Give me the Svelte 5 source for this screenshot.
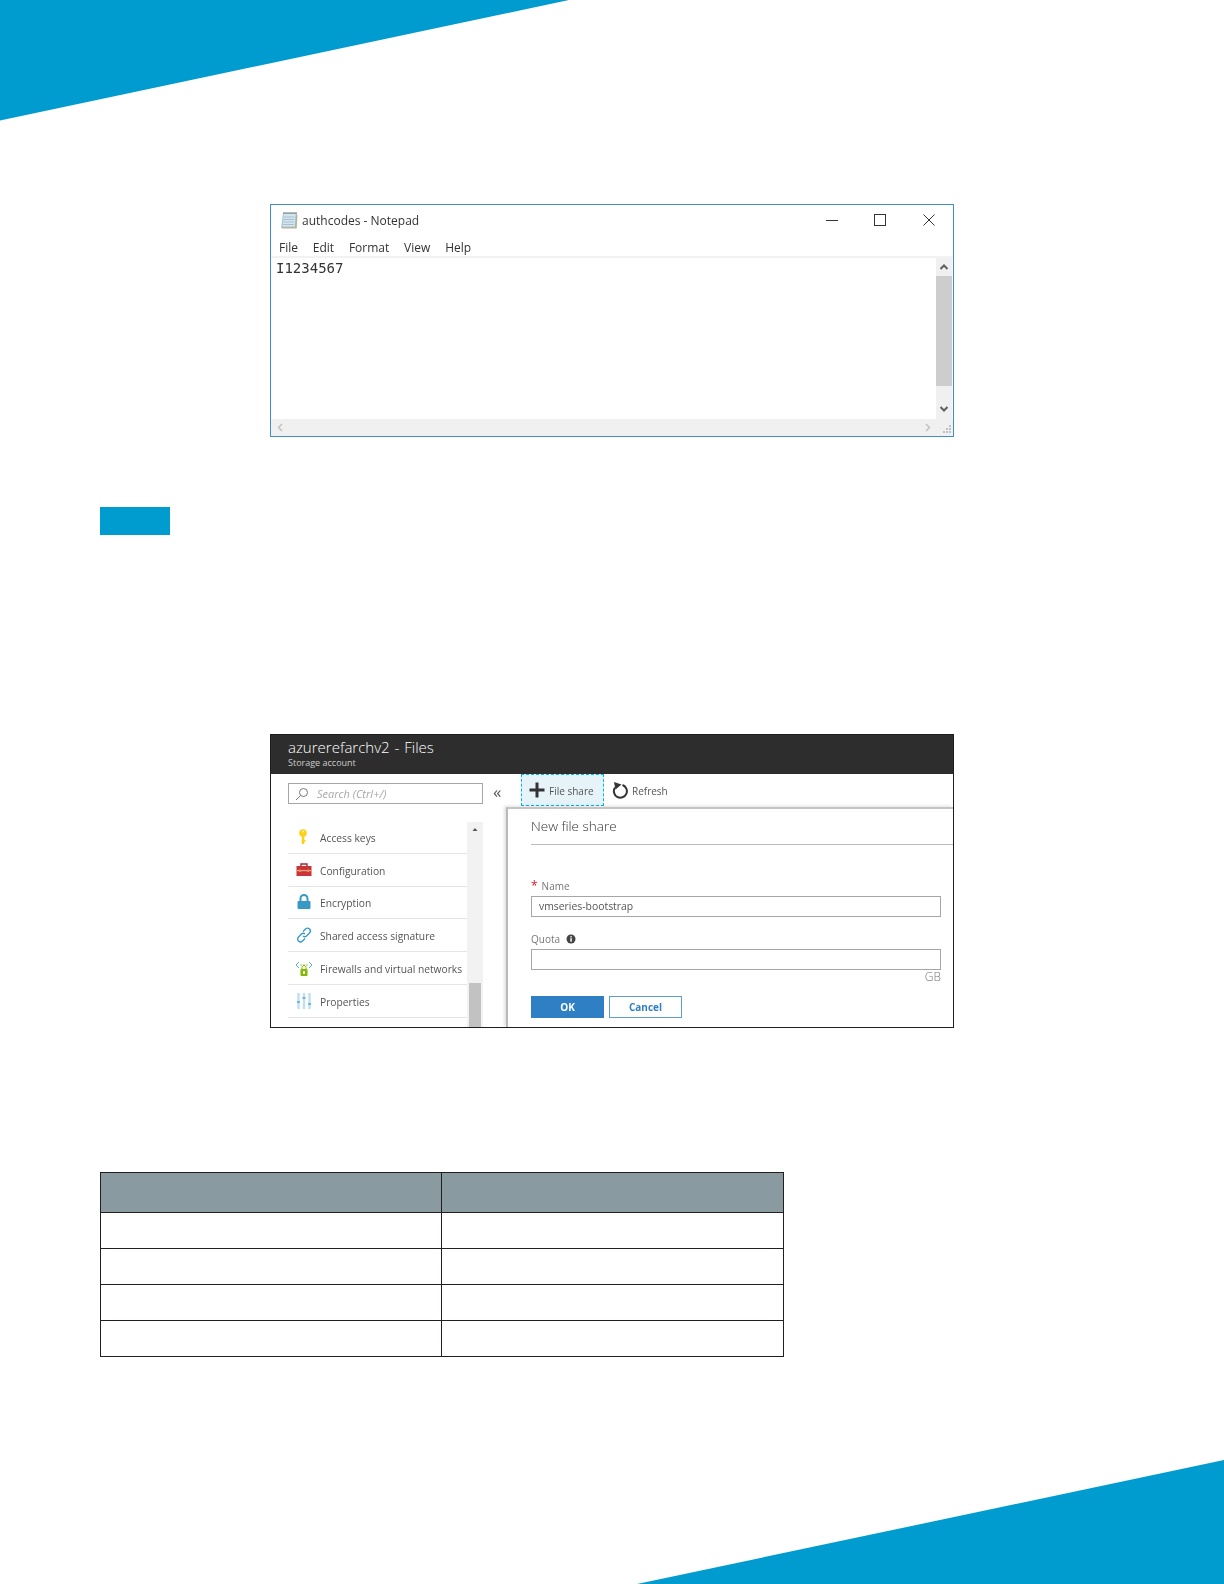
<script>
  const menu = ['File', 'Edit', 'Format', 'View', 'Help'];
  const navItems = [
    { label: 'Access keys', icon: 'key' },
    { label: 'Configuration', icon: 'toolbox' },
    { label: 'Encryption', icon: 'lock' },
    { label: 'Shared access signature', icon: 'link' },
    { label: 'Firewalls and virtual networks', icon: 'firewall' },
    { label: 'Properties', icon: 'sliders' }
  ];
  const rows = [1, 2, 3, 4];
</script>

<div class="page">
  <svg class="corner top" width="569" height="121" viewBox="0 0 569 121"><polygon points="0,0 569,0 0,120.500" /></svg>
  <svg class="corner bottom" width="587" height="124" viewBox="0 0 587 124"><polygon points="587,0 587,124 0,124" /></svg>

  <div class="notepad">
    <div class="np-title">
      <svg class="np-icon" width="18" height="18" viewBox="0 0 18 18">
        <path d="M3 2h14l-1 15H1z" fill="#a9c9dc" />
        <path d="M4 3h11.500l-.8 12.500H2.800z" fill="#d3e6f0" />
        <path d="M4 6h10.500M3.800 8.500h10.500M3.500 11h10.500M3.300 13.500h10.500" stroke="#a6c0cf" />
        <path d="M3.500 2h13" stroke="#777" stroke-dasharray="1 1" stroke-width="2" />
        <path d="M16 4h1.500l-.8 13.500H2V16h13z" fill="#b8b29c" />
      </svg>
      <span class="np-name">authcodes - Notepad</span>
      <div class="np-controls">
        <svg width="16" height="16" viewBox="0 0 16 16"><path d="M1 8.500h12" stroke="#333" fill="none" /></svg>
        <svg width="16" height="16" viewBox="0 0 16 16"><rect x="1.500" y="2.500" width="11" height="11" stroke="#333" fill="none" /></svg>
        <svg width="16" height="16" viewBox="0 0 16 16"><path d="M2.500 2.500l11 11M13.500 2.500l-11 11" stroke="#333" fill="none" /></svg>
      </div>
    </div>
    <div class="np-menu">
      {#each menu as m}<span>{m}</span>{/each}
    </div>
    <div class="np-body">
      <div class="np-text">I1234567</div>
      <div class="vscroll">
        <svg width="16" height="18" viewBox="0 0 16 18"><path d="M4.500 11l3.500-3.500 3.500 3.500" stroke="#606060" stroke-width="2" fill="none" /></svg>
        <div class="vtrack"><div class="vthumb"></div></div>
        <svg width="16" height="18" viewBox="0 0 16 18"><path d="M4.500 6l3.500 3.500 3.500-3.500" stroke="#606060" stroke-width="2" fill="none" /></svg>
      </div>
    </div>
    <div class="hscroll">
      <svg width="16" height="17" viewBox="0 0 16 17"><path d="M10 5l-3.500 3.500 3.500 3.500" stroke="#c4c4c4" stroke-width="1.600" fill="none" /></svg>
      <svg width="16" height="17" viewBox="0 0 16 17"><path d="M6 5l3.500 3.500-3.500 3.500" stroke="#c4c4c4" stroke-width="1.600" fill="none" /></svg>
      <svg width="16" height="17" viewBox="0 0 16 17"><path d="M12 6h2v2h-2zM9 9h2v2H9zM12 9h2v2h-2zM6 12h2v2H6zM9 12h2v2H9zM12 12h2v2h-2z" fill="#c0c0c0" /></svg>
    </div>
  </div>

  <div class="callout"></div>

  <div class="azure">
    <header class="az-head">
      <div class="az-title">azurerefarchv2 - Files</div>
      <div class="az-sub">Storage account</div>
    </header>
    <div class="az-main">
      <aside class="az-side">
        <div class="az-searchrow">
          <div class="az-search">
            <svg width="14" height="14" viewBox="0 0 14 14"><circle cx="8.500" cy="5.500" r="4" stroke="#777" fill="none" /><path d="M5.500 8.500L1 13" stroke="#777" fill="none" /></svg>
            <span>Search (Ctrl+/)</span>
          </div>
          <span class="collapse">«</span>
        </div>
        <div class="az-navwrap">
          <ul class="az-nav">
            {#each navItems as item}
              <li>
                <svg width="18" height="18" viewBox="0 0 18 18">
                  {#if item.icon === 'key'}
                    <circle cx="8" cy="5" r="3.800" fill="#fcd116" /><rect x="6.800" y="7" width="2.500" height="9" fill="#fcd116" /><rect x="9" y="12" width="1.500" height="1.500" fill="#fcd116" /><circle cx="8" cy="3.500" r="1" fill="#fff3b0" />
                  {:else if item.icon === 'toolbox'}
                    <path d="M6 5V3h6v2" stroke="#a4262c" fill="none" stroke-width="1.400" /><rect x="1.500" y="5" width="15" height="10" fill="#c8343a" /><rect x="1.500" y="9" width="15" height="1.200" fill="#f0a38f" /><rect x="4" y="8.500" width="2" height="2.500" fill="#ef8c3c" /><rect x="12" y="8.500" width="2" height="2.500" fill="#ef8c3c" />
                  {:else if item.icon === 'lock'}
                    <path d="M5.500 8V5.500a3.500 3.500 0 0 1 7 0V8" stroke="#3999c6" stroke-width="2" fill="none" /><rect x="2.500" y="8" width="13" height="8" rx="1" fill="#3999c6" />
                  {:else if item.icon === 'link'}
                    <path d="M8 5.500l2.500-2.500a2.500 2.500 0 0 1 4 4l-3 3a2.500 2.500 0 0 1-3.500 0M10 12.500L7.500 15a2.500 2.500 0 0 1-4-4l3-3a2.500 2.500 0 0 1 3.500 0" stroke="#3999c6" stroke-width="1.400" fill="none" />
                  {:else if item.icon === 'firewall'}
                    <path d="M4 3L1 6 4 9M14 3l3 3-3 3" stroke="#59b4d9" fill="none" /><path d="M5.500 6h1M8.500 6h1M11.500 6h1" stroke="#7fba00" stroke-width="1.400" /><path d="M7 10V8.500a2 2 0 0 1 4 0V10" stroke="#7fba00" fill="none" /><rect x="5.500" y="10" width="7" height="7" rx="1" fill="#7fba00" /><rect x="8" y="12" width="2" height="3" fill="#fff" />
                  {:else}
                    <path d="M3.500 1v16M9 1v16M14.500 1v16" stroke="#bfe0f0" stroke-width="2.400" /><path d="M2 10h3M7.500 6h3M13 12h3" stroke="#59a8d0" stroke-width="1.600" />
                  {/if}
                </svg>
                <span>{item.label}</span>
              </li>
            {/each}
          </ul>
          <div class="az-navscroll">
            <svg width="16" height="16" viewBox="0 0 16 16"><path d="M5.500 9l2.500-3 2.500 3z" fill="#555" /></svg>
            <div class="az-navthumb"></div>
          </div>
        </div>
      </aside>
      <section class="az-right">
        <div class="az-toolbar">
          <div class="tool selected">
            <svg width="16" height="16" viewBox="0 0 16 16"><path d="M6.500 0.500h3v6h6v3h-6v6h-3v-6h-6v-3h6z" fill="#333" /></svg>
            <span>File share</span>
          </div>
          <div class="tool">
            <svg width="18" height="18" viewBox="0 0 18 18"><path d="M11.500 4a6.500 6.500 0 1 1-7.500 2.500" stroke="#333" stroke-width="2" fill="none" /><path d="M3 1l7.500 2.500-6 5z" fill="#333" /></svg>
            <span>Refresh</span>
          </div>
        </div>
        <div class="blade">
          <h2>New file share</h2>
          <label class="fld name"><span class="star">*</span> Name</label>
          <div class="input">vmseries-bootstrap</div>
          <label class="fld quota">
            Quota
            <svg width="10" height="10" viewBox="0 0 10 10"><circle cx="5" cy="5" r="4.500" fill="#444" /><rect x="4.300" y="4.200" width="1.500" height="3.500" fill="#fff" /><rect x="4.300" y="2.200" width="1.500" height="1.300" fill="#fff" /></svg>
          </label>
          <div class="input"></div>
          <div class="unit">GB</div>
          <div class="buttons">
            <button class="ok">OK</button>
            <button class="cancel">Cancel</button>
          </div>
        </div>
      </section>
    </div>
  </div>

  <table class="grid">
    <thead>
      <tr><th></th><th></th></tr>
    </thead>
    <tbody>
      {#each rows as r (r)}
        <tr><td></td><td></td></tr>
      {/each}
    </tbody>
  </table>
</div>

<style>
  :global(body) {
    margin: 0;
    background: #fff;
  }
  .page {
    position: relative;
    width: 1224px;
    height: 1584px;
    overflow: hidden;
    box-sizing: border-box;
    padding-top: 204px;
    font-family: "Open Sans", sans-serif;
  }
  .corner {
    position: absolute;
    fill: #009bcf;
  }
  .corner.top {
    left: 0;
    top: 0;
  }
  .corner.bottom {
    right: 0;
    bottom: 0;
  }

  /* notepad */
  .notepad {
    margin-left: 270px;
    width: 684px;
    height: 233px;
    box-sizing: border-box;
    border: 1px solid #3f8fcf;
    display: flex;
    flex-direction: column;
    color: #333;
    filter: blur(0.25px);
  }
  .np-title {
    display: flex;
    align-items: center;
    height: 29px;
    padding: 0 16px 0 9px;
  }
  .np-icon {
    margin-right: 4px;
  }
  .np-name {
    font-size: 12px;
    flex: 1;
    padding-top: 2px;
  }
  .np-controls {
    display: flex;
    gap: 32px;
  }
  .np-menu {
    display: flex;
    gap: 14.800px;
    padding: 5px 0 0 8px;
    box-sizing: border-box;
    font-size: 12px;
    border-bottom: 2px solid #f2f2f2;
    height: 24px;
  }
  .np-body {
    flex: 1;
    display: flex;
    min-height: 0;
  }
  .np-text {
    flex: 1;
    padding: 2px 0 0 5px;
    font-family: "DejaVu Sans Mono", monospace;
    font-size: 14px;
    line-height: 17px;
  }
  .vscroll {
    width: 16px;
    margin-right: 1px;
    background: #f0f0f0;
    display: flex;
    flex-direction: column;
  }
  .vtrack {
    flex: 1;
  }
  .vthumb {
    height: 110px;
    background: #cdcdcd;
  }
  .hscroll {
    height: 17px;
    background: #f0f0f0;
    display: flex;
    justify-content: space-between;
  }
  .hscroll svg:nth-child(1) {
    margin-left: 1px;
  }
  .hscroll svg:nth-child(2) {
    margin-left: auto;
    margin-right: 1px;
  }

  .callout {
    margin: 70px 0 0 100px;
    width: 70px;
    height: 28px;
    background: #009bcf;
  }

  /* azure */
  .azure {
    margin: 199px 0 0 270px;
    width: 684px;
    height: 294px;
    box-sizing: border-box;
    border: 1px solid #1e1e1e;
    display: flex;
    flex-direction: column;
    overflow: hidden;
    filter: blur(0.25px);
  }
  .az-head {
    background: #2d2d2d;
    color: #fff;
    height: 39px;
    padding: 2px 0 0 17px;
    box-sizing: border-box;
  }
  .az-title {
    font-size: 15px;
    font-weight: 300;
    line-height: 20px;
    word-spacing: 1px;
  }
  .az-sub {
    font-size: 9px;
    line-height: 11px;
    color: #ccc;
  }
  .az-main {
    flex: 1;
    display: flex;
    min-height: 0;
  }
  .az-side {
    width: 235px;
    padding-left: 17px;
    box-sizing: border-box;
  }
  .az-searchrow {
    display: flex;
    align-items: center;
    margin-top: 9px;
  }
  .az-search {
    width: 195px;
    height: 21px;
    box-sizing: border-box;
    border: 1px solid #a6a6a6;
    display: flex;
    align-items: center;
    gap: 8px;
    padding-left: 6px;
    font-size: 11px;
    font-style: italic;
    color: #a8a8a8;
  }
  .collapse {
    margin: -4px 0 0 10px;
    font-size: 17px;
    line-height: 15px;
    color: #555;
  }
  .az-navwrap {
    display: flex;
    margin-top: 17px;
  }
  .az-nav {
    list-style: none;
    margin: 0;
    padding: 0;
    width: 179px;
    flex-shrink: 0;
  }
  .az-nav li {
    height: 32.800px;
    box-sizing: border-box;
    border-bottom: 1px solid #e5e5e5;
    display: flex;
    align-items: center;
    gap: 7px;
    padding: 2px 0 0 7px;
    font-size: 10.250px;
    color: #555;
    white-space: nowrap;
  }
  .az-nav li svg {
    flex-shrink: 0;
    margin-top: -2px;
  }
  .az-navscroll {
    width: 16px;
    height: 205px;
    margin-top: 1px;
    background: #f2f2f2;
    display: flex;
    flex-direction: column;
    align-items: center;
    flex-shrink: 0;
  }
  .az-navthumb {
    width: 12px;
    height: 44px;
    margin-top: auto;
    background: #c2c2c2;
  }
  .az-right {
    flex: 1;
    display: flex;
    flex-direction: column;
    min-width: 0;
  }
  .az-toolbar {
    display: flex;
    align-items: flex-start;
    height: 33px;
    padding-left: 15px;
    gap: 7px;
  }
  .tool {
    display: flex;
    align-items: center;
    gap: 4px;
    font-size: 10px;
    color: #555;
    height: 32px;
    box-sizing: border-box;
    padding: 0 7px;
  }
  .tool span {
    padding-top: 2px;
  }
  .tool:last-child {
    padding: 0;
    gap: 3px;
  }
  .tool.selected {
    width: 83px;
    background: #e6f4fa;
    border: 1px dashed #00b7ea;
  }
  .blade {
    flex: 1;
    border-left: 2px solid #b8b8b8;
    border-top: 2px solid #c4c4c4;
    padding: 0 12px 0 23px;
    min-height: 0;
    color: #555;
    box-shadow: -2px -1px 3px rgba(0, 0, 0, 0.12);
  }
  .blade h2 {
    margin: 0 -12px 0 0;
    height: 36px;
    box-sizing: border-box;
    padding-top: 8px;
    font-size: 13.500px;
    line-height: 18px;
    font-weight: 300;
    color: #333;
    border-bottom: 1px solid #bbb;
  }
  .fld {
    display: flex;
    align-items: center;
    gap: 4px;
    font-size: 10px;
    color: #777;
  }
  .fld.name {
    margin-top: 33px;
    height: 18px;
    padding-bottom: 3px;
    box-sizing: border-box;
  }
  .fld.quota {
    margin-top: 12px;
    height: 20px;
    gap: 6px;
  }
  .star {
    color: #e81123;
    font-size: 12px;
  }
  .input {
    height: 21px;
    box-sizing: border-box;
    border: 1px solid #a6a6a6;
    padding-left: 7px;
    font-size: 10.400px;
    line-height: 18px;
    color: #555;
  }
  .unit {
    text-align: right;
    font-size: 12px;
    font-weight: 300;
    line-height: 14px;
    color: #777;
  }
  .buttons {
    display: flex;
    gap: 5px;
    margin-top: 12px;
  }
  .buttons button {
    width: 73px;
    height: 22px;
    padding: 0;
    box-sizing: border-box;
    font-family: inherit;
    font-size: 10px;
    font-weight: 700;
  }
  .ok {
    background: #2f7fc4;
    border: 0;
    color: #fff;
  }
  .cancel {
    background: #fff;
    border: 1px solid #5b9fd6;
    color: #2f7fc4;
  }

  /* empty table */
  .grid {
    margin: 144px 0 0 100px;
    width: 684px;
    border-collapse: collapse;
    table-layout: fixed;
  }
  .grid th,
  .grid td {
    border: 1px solid #231f20;
    padding: 0;
    height: 35px;
  }
  .grid th {
    height: 39px;
    background: #8a9aa1;
  }
  .grid th:first-child {
    width: 340px;
  }
</style>
